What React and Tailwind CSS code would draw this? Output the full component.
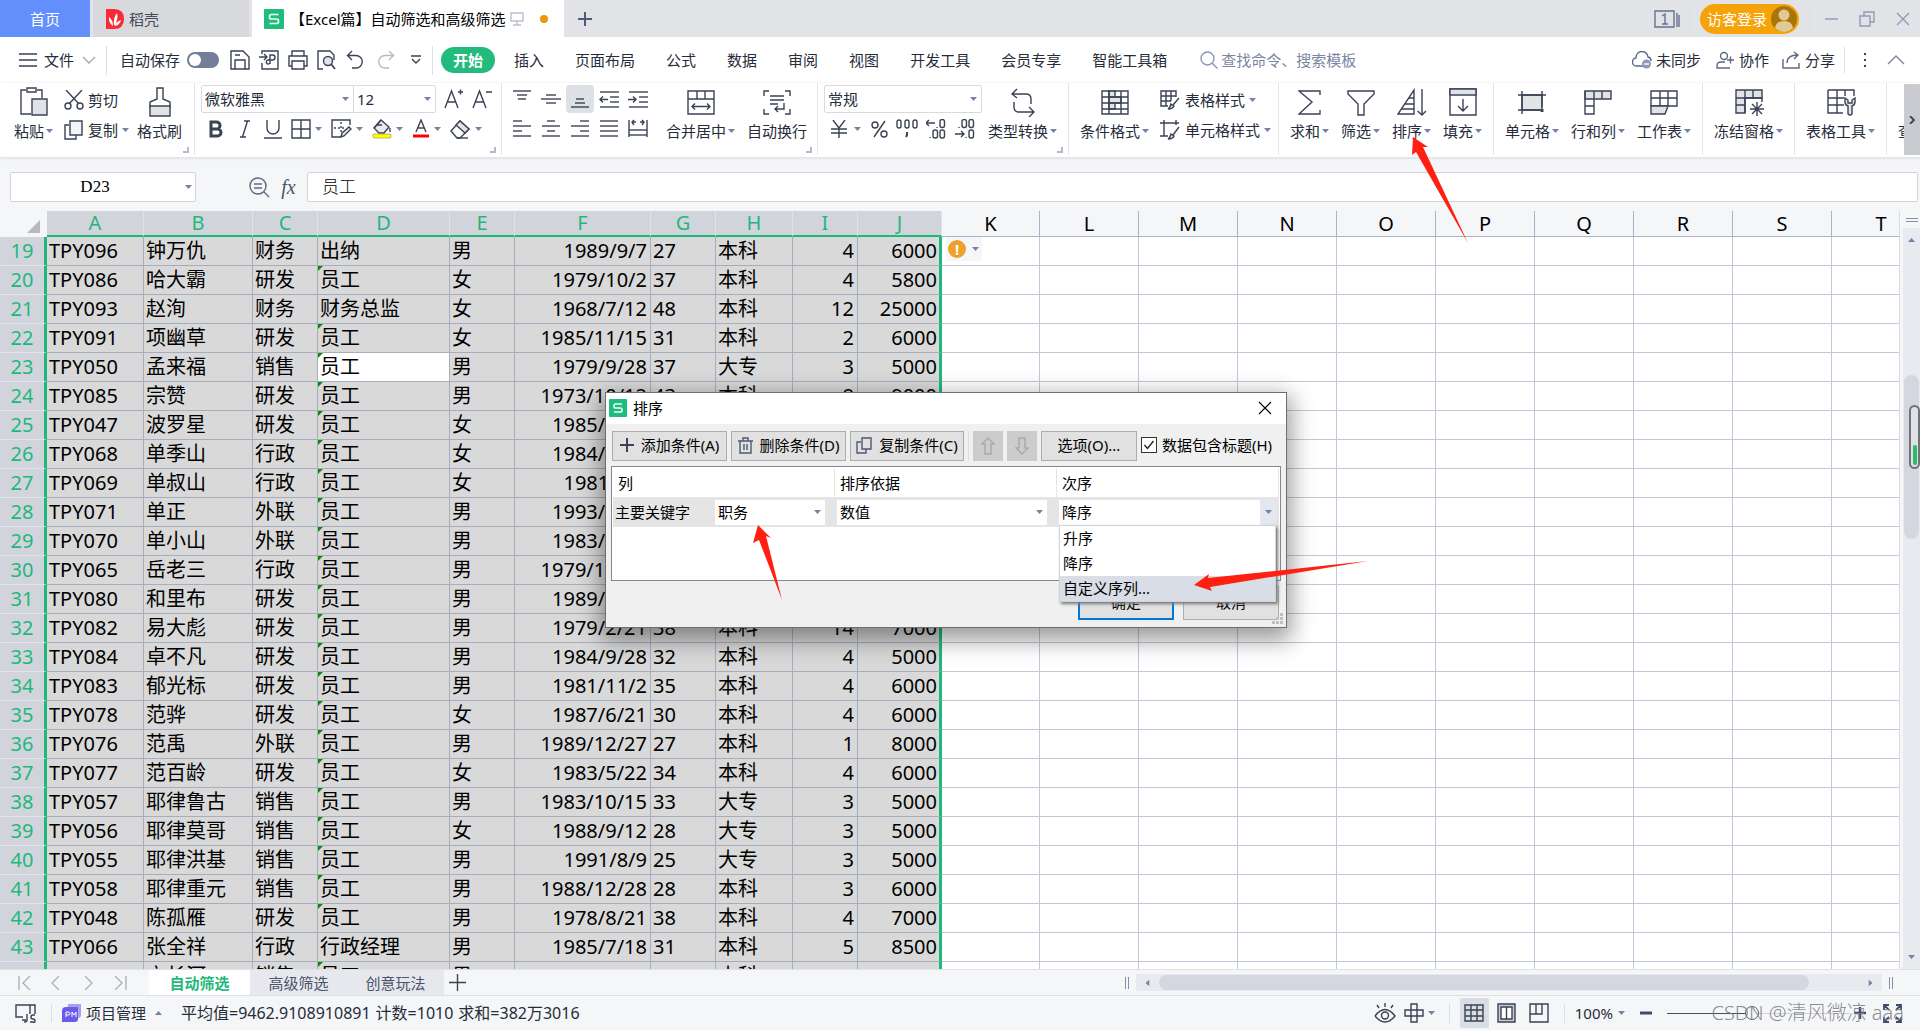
import { useState } from 'react';
import clsx from 'clsx';

const columns = [
  { name: 'A', width: 97 },
  { name: 'B', width: 109 },
  { name: 'C', width: 65 },
  { name: 'D', width: 132 },
  { name: 'E', width: 65 },
  { name: 'F', width: 136, right: true },
  { name: 'G', width: 65 },
  { name: 'H', width: 77 },
  { name: 'I', width: 65, right: true },
  { name: 'J', width: 84, right: true },
  { name: 'K', width: 98 },
  ...'LMNOPQRST'.split('').map((name) => ({ name, width: 99 })),
];
const SELECTED = 10;
const tableWidth = 47 + columns.reduce((sum, c) => sum + c.width, 0);

const rows = [
  ['TPY096', '钟万仇', '财务', '出纳', '男', '1989/9/7', '27', '本科', '4', '6000'],
  ['TPY086', '哈大霸', '研发', '员工', '女', '1979/10/2', '37', '本科', '4', '5800'],
  ['TPY093', '赵洵', '财务', '财务总监', '女', '1968/7/12', '48', '本科', '12', '25000'],
  ['TPY091', '项幽草', '研发', '员工', '女', '1985/11/15', '31', '本科', '2', '6000'],
  ['TPY050', '孟来福', '销售', '员工', '男', '1979/9/28', '37', '大专', '3', '5000'],
  ['TPY085', '宗赞', '研发', '员工', '男', '1973/10/12', '43', '本科', '8', '9000'],
  ['TPY047', '波罗星', '研发', '员工', '女', '1985/4/12', '31', '本科', '4', '6000'],
  ['TPY068', '单季山', '行政', '员工', '女', '1984/7/12', '32', '本科', '4', '5000'],
  ['TPY069', '单叔山', '行政', '员工', '女', '1981/3/5', '35', '本科', '4', '5000'],
  ['TPY071', '单正', '外联', '员工', '男', '1993/9/14', '23', '本科', '1', '5000'],
  ['TPY070', '单小山', '外联', '员工', '男', '1983/7/16', '33', '本科', '3', '6000'],
  ['TPY065', '岳老三', '行政', '员工', '男', '1979/10/12', '37', '大专', '3', '5000'],
  ['TPY080', '和里布', '研发', '员工', '男', '1989/8/16', '27', '本科', '4', '6000'],
  ['TPY082', '易大彪', '研发', '员工', '男', '1979/2/21', '38', '本科', '14', '7000'],
  ['TPY084', '卓不凡', '研发', '员工', '男', '1984/9/28', '32', '本科', '4', '5000'],
  ['TPY083', '郁光标', '研发', '员工', '男', '1981/11/2', '35', '本科', '4', '6000'],
  ['TPY078', '范骅', '研发', '员工', '女', '1987/6/21', '30', '本科', '4', '6000'],
  ['TPY076', '范禹', '外联', '员工', '男', '1989/12/27', '27', '本科', '1', '8000'],
  ['TPY077', '范百龄', '研发', '员工', '女', '1983/5/22', '34', '本科', '4', '6000'],
  ['TPY057', '耶律鲁古', '销售', '员工', '男', '1983/10/15', '33', '大专', '3', '5000'],
  ['TPY056', '耶律莫哥', '销售', '员工', '女', '1988/9/12', '28', '大专', '3', '5000'],
  ['TPY055', '耶律洪基', '销售', '员工', '男', '1991/8/9', '25', '大专', '3', '5000'],
  ['TPY058', '耶律重元', '销售', '员工', '男', '1988/12/28', '28', '本科', '3', '6000'],
  ['TPY048', '陈孤雁', '研发', '员工', '男', '1978/8/21', '38', '本科', '4', '7000'],
  ['TPY066', '张全祥', '行政', '行政经理', '男', '1985/7/18', '31', '本科', '5', '8500'],
  ['TPY051', '方长河', '销售', '员工', '男', '1982/11/13', '34', '本科', '2', '4500'],
];

const menus = ['插入', '页面布局', '公式', '数据', '审阅', '视图', '开发工具', '会员专享', '智能工具箱'];

const Icon = ({ w, h, children, color = '#3a4254', className }) => (
  <svg
    width={w}
    height={h}
    viewBox={`0 0 ${w} ${h}`}
    fill="none"
    stroke={color}
    strokeWidth="1.4"
    className={clsx('shrink-0', className)}
  >
    {children}
  </svg>
);

const Caret = ({ up, className }) => (
  <svg width="7" height="4" viewBox="0 0 7 4" fill="#7483a3" className={clsx('shrink-0', className)}>
    <path d={up ? 'M0 4h7L3.5 0z' : 'M0 0h7L3.5 4z'} />
  </svg>
);

const Logo = ({ size }) => (
  <svg width={size} height={size} viewBox="0 0 20 20" className="shrink-0">
    <rect width="20" height="20" rx="1" fill="#1fbd7d" />
    <path d="M14.5 5.5H7.5a2 2 0 0 0-2 2v.5a2 2 0 0 0 2 2h5a2 2 0 0 1 2 2v.5a2 2 0 0 1-2 2h-7" fill="none" stroke="#e9fff5" strokeWidth="1.7" />
  </svg>
);

const icons = {
  save: (
    <Icon w={20} h={20}>
      <path d="M1 1h12l6 6v12H1zM5 19v-9h10v9M5 5h5" />
    </Icon>
  ),
  exportPdf: (
    <Icon w={20} h={20}>
      <path d="M3 4V1h16v18H3v-6M0 7h8M5 4l3 3-3 3M11 14V5h2.500a2.500 2.500 0 0 1 0 5H9a2 2 0 1 0 2 3" />
    </Icon>
  ),
  print: (
    <Icon w={20} h={20}>
      <path d="M4 6V1h12v5M4 16H1V6h18v10h-3M4 11h12v8H4z" />
    </Icon>
  ),
  preview: (
    <Icon w={20} h={20}>
      <path d="M6 19H1V1h12l4 4v5" />
      <circle cx="11" cy="11" r="4.500" fill="#dfe3ec" />
      <path d="m14 14 4 5" strokeWidth="1.800" />
    </Icon>
  ),
  undo: (
    <Icon w={19} h={20}>
      <path d="M6 1 1.500 5.500 6 10M2 5.500h8a6 6 0 0 1 0 12.500H6" />
    </Icon>
  ),
  redo: (
    <Icon w={19} h={20} color="#b5bac4">
      <path d="M13 1l4.500 4.500L13 10M17 5.500H9A6 6 0 0 0 9 18h4" />
    </Icon>
  ),
  paste: (
    <Icon w={28} h={30}>
      <path d="M6 3H1v24h10M17 3h5v8M7 1h9v4H7z" />
      <path d="M12 12h15v16H12z" fill="#e1e3e6" />
    </Icon>
  ),
  cut: (
    <Icon w={20} h={20}>
      <path d="M2 0l13 14M18 0L5 14" />
      <circle cx="4" cy="16" r="3" />
      <circle cx="16" cy="16" r="3" />
    </Icon>
  ),
  copy: (
    <Icon w={20} h={20}>
      <path d="M5 5H1v14h11v-4" />
      <path d="M6 1h12v14H6z" fill="#f4f5f7" />
    </Icon>
  ),
  brush: (
    <Icon w={24} h={30}>
      <path d="M9 12V1h6v11l7 3v5H2v-5z" />
      <path d="M2 19h20v10H2z" fill="#e1e3e6" />
    </Icon>
  ),
  biggerFont: (
    <Icon w={20} h={20}>
      <path d="M1 19 7.500 2 14 19M3.500 13h8M14 3h5M16.500.5v5" />
    </Icon>
  ),
  smallerFont: (
    <Icon w={20} h={20}>
      <path d="M1 19 7.500 2 14 19M3.500 13h8M14 3h6" />
    </Icon>
  ),
  bold: (
    <Icon w={15} h={18}>
      <path d="M3 2h5.500a3.500 3.500 0 0 1 0 7H3zM3 9h6.500a3.500 3.500 0 0 1 0 7H3z" strokeWidth="3" />
    </Icon>
  ),
  italic: (
    <Icon w={12} h={18}>
      <path d="M5 1h6M1 17h6M8.500 1l-5 16" />
    </Icon>
  ),
  underline: (
    <Icon w={20} h={19}>
      <path d="M4 0v8a6 6 0 0 0 12 0V0M1 18h18" />
    </Icon>
  ),
  borders: (
    <Icon w={20} h={20}>
      <path d="M1 1h18v18H1zM10 1v18M1 10h18" />
    </Icon>
  ),
  drawBorder: (
    <Icon w={21} h={20}>
      <path d="M10 18H1V1h18v5" />
      <path d="M10 3v12M3 9h11" strokeDasharray="2 2" />
      <path d="m10 18 1-4 7-6 2 2-7 7z" fill="#e1e3e6" />
    </Icon>
  ),
  fill: (
    <Icon w={20} h={20}>
      <path d="m9 1 8 7-5 6H7L2 9z" fill="#e9eaed" />
      <path d="M2 9 9 1M4 6h6M18 9v4" />
      <rect x="1" y="15" width="18" height="4" rx="1" fill="#ffff00" stroke="#8f8f5a" strokeWidth="0.600" />
    </Icon>
  ),
  fontColor: (
    <Icon w={18} h={20}>
      <path d="M4 13 9 1l5 12M5.500 9h7" />
      <path d="M1 17h16" stroke="#ff0000" strokeWidth="3" />
    </Icon>
  ),
  eraser: (
    <Icon w={21} h={20}>
      <path d="m1 12 9-10 9 8-9 9H7z" />
      <path d="m6 6 4-4 9 8-4 4z" fill="#e1e3e6" />
      <path d="M7 19h11" />
    </Icon>
  ),
  merge: (
    <Icon w={28} h={30}>
      <path d="M1 4h26v23H1zM1 12h26M10 4v8M18 4v8M5 19.500h18M8 16.500l-3 3 3 3M20 16.500l3 3-3 3" />
    </Icon>
  ),
  wrap: (
    <Icon w={28} h={30}>
      <path d="M6 4H1v5M22 4h5v5M6 27H1v-5M22 27h5v-5M7 9h14M7 13h14M7 17h8M21 16v6h-9M15 19l-3 3 3 3" />
    </Icon>
  ),
  convert: (
    <Icon w={26} h={30}>
      <path d="M7 2 2 7l5 4M2 7h14q5 0 5 5v5M19 20l5 5-5 5M24 25H9q-5 0-5-5v-5" />
    </Icon>
  ),
  conditional: (
    <Icon w={28} h={30}>
      <path d="M1 4h26v23H1z" />
      <path d="M8 4h6v6H8zM8 10h12v6H8zM8 16h6v6H8z" fill="#e1e3e6" />
      <path d="M1 10h26M1 16h26M1 22h26M8 4v23M20 4v23" />
    </Icon>
  ),
  tableStyle: (
    <Icon w={21} h={20}>
      <path d="M8 16H1V1h15v6M1 6h15M1 11h10M6 1v15M11 1v10" />
      <path d="m19 8-6 7M11 14l3 2q-1 3-6 3 2-1 3-5z" fill="#e1e3e6" />
    </Icon>
  ),
  cellStyle: (
    <Icon w={21} h={20}>
      <path d="M4 0v16M0 3h19M16 0v5M0 16h8" />
      <path d="m19 7-6 8M11 14l3 2q-1 3-6 3 2-1 3-5z" fill="#e1e3e6" />
    </Icon>
  ),
  sum: (
    <Icon w={24} h={30}>
      <path d="M22 8V4H1l13 11L1 27h21v-4" />
    </Icon>
  ),
  filter: (
    <Icon w={28} h={30}>
      <path d="M1 4h26v3L17 17v11h-6V17L1 7z" />
    </Icon>
  ),
  sort: (
    <Icon w={30} h={30}>
      <path d="M17 3v24H1zM17 11h-5M17 17H8M17 22H4M25 2v26M20.500 24l4.500 4 4-4" />
    </Icon>
  ),
  fillDown: (
    <Icon w={28} h={30}>
      <path d="M1 2h26v26H1z" />
      <path d="M1 2h26v6H1z" fill="#e1e3e6" />
      <path d="M14 12v12M9 19l5 5 5-5" />
    </Icon>
  ),
  cells: (
    <Icon w={30} h={30}>
      <path d="M5 8h20v15H5z" fill="#e1e3e6" />
      <path d="M5 4v23M1 8h28M25 4v16M1 23h22" />
      <path d="M25 22v3" strokeWidth="3" />
    </Icon>
  ),
  rowsCols: (
    <Icon w={28} h={30}>
      <path d="M1 4h26v8H1z" fill="#e1e3e6" />
      <path d="M1 4v23h9V4M18 4v8M1 19h9" />
    </Icon>
  ),
  worksheet: (
    <Icon w={28} h={30}>
      <path d="M1 4h26v15H1zM1 11h26M10 4v15M18 4v15" />
      <path d="M1 19h17l-3 8H1z" fill="#e1e3e6" />
    </Icon>
  ),
  freeze: (
    <Icon w={30} h={30}>
      <path d="M2 3h26v8H11v15H2z" fill="#e1e3e6" />
      <path d="M11 3v23M19 3v8M2 11h26v4M2 18h9" />
      <path d="M23 15v14M16 22h14M18 17l10 10M28 17 18 27" />
    </Icon>
  ),
  tableTool: (
    <Icon w={30} h={30}>
      <path d="M2 3h26v6M2 3v23h15M2 11h16M2 18h16M11 3v23M19 3v6" />
      <path d="M19 11v4q0 3 3 4v8q2 2 4 0v-8q3-1 3-4v-4l-3 2v3h-4v-3z" fill="#e1e3e6" />
    </Icon>
  ),
};

const LineIcon = ({ lines, children }) => (
  <Icon w={20} h={20}>
    {lines.map(([x1, x2, y]) => (
      <path key={y} d={`M${x1} ${y}H${x2}`} />
    ))}
    {children}
  </Icon>
);

const alignTop = [
  { id: '顶端对齐', lines: [[1, 19, 2], [5, 15, 6], [6, 14, 10]] },
  { id: '垂直居中', lines: [[5, 15, 6], [0, 20, 10], [5, 15, 14]] },
  { id: '底端对齐', lines: [[6, 14, 10], [5, 15, 14], [1, 19, 18]], active: true },
  { id: '减少缩进', lines: [[1, 20, 3], [11, 20, 8], [11, 20, 13], [1, 20, 18]], extra: 'M9 10.500H1M4 7.500l-3 3 3 3' },
  { id: '增加缩进', lines: [[1, 20, 3], [11, 20, 8], [11, 20, 13], [1, 20, 18]], extra: 'M0 10.500h8M5 7.500l3 3-3 3' },
];
const alignBottom = [
  { id: '左对齐', lines: [[1, 10, 2], [1, 19, 7], [1, 10, 12], [1, 19, 17]] },
  { id: '水平居中', lines: [[6, 14, 2], [1, 19, 7], [6, 14, 12], [1, 19, 17]] },
  { id: '右对齐', lines: [[10, 19, 2], [1, 19, 7], [10, 19, 12], [1, 19, 17]] },
  { id: '两端对齐', lines: [[1, 19, 2], [1, 19, 7], [1, 19, 12], [1, 19, 17]] },
  { id: '分散对齐', lines: [[1, 19, 11], [1, 19, 16]], extra: 'M1 1v17M19 1v17M4 3h4M12 3h4M6 1 4 3l2 3M14 1l2 2-2 3' },
];

const Group = ({ width, corner, children }) => (
  <div className={clsx('relative flex h-[72px] shrink-0 border-r border-[#e4e6ea]', width)}>
    {children}
    {corner && (
      <span className="absolute right-[5px] bottom-0.5 h-1.5 w-1.5 border-r-2 border-b-2 border-[#b4bac8]" />
    )}
  </div>
);

const BigButton = ({ icon, label, caret = true }) => (
  <button type="button" className="flex shrink-0 flex-col items-center pt-1">
    <span className="flex h-[30px] items-center">{icons[icon]}</span>
    <span className="mt-1 flex items-center leading-5 whitespace-nowrap">
      {label}
      {caret && <Caret className="ml-0.5" />}
    </span>
  </button>
);

const SmallButton = ({ icon, label, caret = true }) => (
  <button type="button" className="flex h-[30px] shrink-0 items-center gap-1 leading-5 whitespace-nowrap">
    {icons[icon]}
    {label}
    {caret && <Caret />}
  </button>
);

const IconButton = ({ icon, caret, label }) => (
  <button type="button" aria-label={label} className="flex shrink-0 items-center gap-1">
    {icons[icon]}
    {caret && <Caret />}
  </button>
);

const Combo = ({ label, value, options = [], className }) => (
  <div className={clsx('relative bg-white', className)}>
    <select
      aria-label={label}
      defaultValue={value}
      className="h-full w-full appearance-none bg-transparent pr-4 pl-[3px] leading-5 outline-none"
    >
      {[value, ...options].map((o) => (
        <option key={o}>{o}</option>
      ))}
    </select>
    <Caret className="pointer-events-none absolute top-1/2 right-1 -mt-0.5" />
  </div>
);

const Sep = ({ className }) => <span className={clsx('w-px shrink-0 bg-[#dcdee3]', className)} />;

const TitleBar = () => (
  <header className="flex h-[37px] shrink-0 items-center bg-[#e2e3e7]">
    <button type="button" className="mr-[3px] h-full w-[90px] bg-[#628ffb] text-white">
      首页
    </button>
    <button type="button" className="mr-[3px] flex h-full w-[156px] items-center gap-[5px] bg-[#d8d9dc] pl-[13px] text-[#444b5c]">
      <svg width="18" height="20" viewBox="0 0 18 20">
        <path d="M0 0h8q10 0 10 10T8 20H0z" fill="#fb2a38" />
        <path d="M8 17Q7 8 11 4q2 6-3 13M7 17Q2 13 3 8q4 3 4 9M9 17q0-4 6-6-1 5-6 6" fill="#fff" />
      </svg>
      稻壳
    </button>
    <button type="button" className="flex h-full w-[312px] items-center bg-white pl-3 text-black">
      <Logo size={20} />
      <span className="ml-1.5 whitespace-nowrap">【Excel篇】自动筛选和高级筛选</span>
      <Icon w={14} h={14} color="#b8c0d2" className="ml-1">
        <path d="M1 1h12v8H1zM7 9v4M3 13h8" />
      </Icon>
      <span className="ml-4 h-2 w-2 rounded-full bg-[#e89b00]" />
    </button>
    <button type="button" aria-label="新建标签" className="ml-[13px]">
      <Icon w={16} h={16} color="#4e5b7a">
        <path d="M8 1v14M1 8h14" strokeWidth="2" />
      </Icon>
    </button>
    <div className="ml-auto flex h-full items-center pr-2.5">
      <Icon w={26} h={18} color="#66728e" className="mr-[9px]">
        <path d="M1 1h19v16H1zM23 3v14M25 5v12" />
        <path d="M8 6l3-2v10M8 14h6" />
      </Icon>
      <Sep className="mr-[10px] h-[25px] bg-[#c6c9d0]" />
      <button type="button" className="mr-[10px] flex h-[30px] w-[99px] items-center justify-between rounded-full bg-[#f6a30a] pr-0.5 pl-[7px] text-white">
        访客登录
        <svg width="26" height="26" viewBox="0 0 26 26">
          <circle cx="13" cy="13" r="13" fill="#a87608" />
          <circle cx="13" cy="9" r="5.500" fill="#e2c893" />
          <path d="M4 22q1-7 9-7t9 7q-4 4-9 4t-9-4" fill="#e2c893" />
        </svg>
      </button>
      <Sep className="mr-[15px] h-[25px] bg-[#c6c9d0]" />
      <div className="flex items-center gap-[21px]">
        <button type="button" aria-label="最小化">
          <Icon w={13} h={16} color="#8f9bb5"><path d="M0 8h13" /></Icon>
        </button>
        <button type="button" aria-label="还原">
          <Icon w={16} h={16} color="#8f9bb5"><path d="M1 5h10v10H1zM5 5V1h10v10h-4" /></Icon>
        </button>
        <button type="button" aria-label="关闭">
          <Icon w={14} h={14} color="#8f9bb5"><path d="m1 1 12 12M13 1 1 13" /></Icon>
        </button>
      </div>
    </div>
  </header>
);

const MenuBar = () => (
  <nav className="flex h-[46px] shrink-0 items-center bg-white pl-[19px] whitespace-nowrap">
    <button type="button" className="flex items-center gap-[7px]">
      <Icon w={18} h={14}><path d="M0 1h18M0 7h18M0 13h18" /></Icon>
      文件
      <Icon w={14} h={8} color="#a3a8b3" className="ml-px"><path d="m1 1 6 6 6-6" /></Icon>
    </button>
    <Sep className="mx-2.5 h-[29px]" />
    <label className="ml-[3px] flex items-center gap-[7px]">
      自动保存
      <input
        type="checkbox"
        className="h-4 w-8 appearance-none rounded-full bg-[#737f99] before:mt-0.5 before:ml-0.5 before:block before:h-3 before:w-3 before:rounded-full before:bg-white"
      />
    </label>
    <div className="ml-[11px] flex items-center gap-[9px]">
      <IconButton icon="save" label="保存" />
      <IconButton icon="exportPdf" label="输出为PDF" />
      <IconButton icon="print" label="打印" />
      <IconButton icon="preview" label="打印预览" />
      <IconButton icon="undo" label="撤销" />
      <span className="ml-0.5 flex"><IconButton icon="redo" label="恢复" /></span>
    </div>
    <button type="button" aria-label="自定义" className="ml-4">
      <Icon w={10} h={10}><path d="M0 1h10M1 4l4 4 4-4" /></Icon>
    </button>
    <Sep className="mr-[10px] ml-[11px] h-[29px]" />
    <button type="button" className="-ml-0.5 h-[26px] w-[54px] rounded-full bg-[#22bb7d] font-bold text-white">
      开始
    </button>
    <div className="ml-[19px] flex gap-[31px]">
      {menus.map((m) => (
        <button type="button" key={m}>
          {m}
        </button>
      ))}
    </div>
    <label className="ml-[33px] flex items-center gap-[3px]">
      <Icon w={18} h={18} color="#8a96b4">
        <circle cx="7.500" cy="7.500" r="6.500" />
        <path d="m12 12 5.500 5.500" />
      </Icon>
      <input
        aria-label="搜索"
        placeholder="查找命令、搜索模板"
        className="w-[150px] outline-none placeholder:text-[#7a86a3]"
      />
    </label>
    <div className="ml-auto flex items-center pr-[15px]">
      <button type="button" className="flex items-center gap-1">
        <Icon w={20} h={18} color="#5d6880">
          <path d="M11 15H5a4 4 0 0 1-1-8 6 6 0 0 1 12-1 4 4 0 0 1 3 4" />
          <circle cx="14.500" cy="13" r="4.500" fill="#8c99b9" stroke="none" />
          <path d="M12 13h5" stroke="#fff" />
        </Icon>
        未同步
      </button>
      <button type="button" className="ml-[15px] flex items-center gap-[5px]">
        <Icon w={18} h={18} color="#5d6880">
          <circle cx="8" cy="5" r="3.500" />
          <path d="M14 17H1v-2q0-4 4-4h4M11 9h7M14.500 5.500v7" />
        </Icon>
        协作
      </button>
      <button type="button" className="ml-[13px] flex items-center gap-[5px]">
        <Icon w={18} h={18} color="#5d6880">
          <path d="M1 8v9h16v-5M5 12q0-8 11-8M12 1l4 3-4 4" />
        </Icon>
        分享
      </button>
      <Sep className="ml-[9px] h-[26px]" />
      <button type="button" aria-label="更多" className="ml-[18px]">
        <Icon w={4} h={16}><path d="M2 1v2M2 7v2M2 13v2" strokeWidth="2" /></Icon>
      </button>
      <button type="button" aria-label="收起功能区" className="ml-5">
        <Icon w={18} h={10} color="#7c8494"><path d="m1 9 8-8 8 8" /></Icon>
      </button>
    </div>
  </nav>
);

const AlignButton = ({ item }) => (
  <button
    type="button"
    aria-label={item.id}
    className={clsx('flex h-7 w-7 items-center justify-center rounded-sm', item.active && 'bg-[#dde0e4]')}
  >
    <LineIcon lines={item.lines}>{item.extra && <path d={item.extra} />}</LineIcon>
  </button>
);

const Ribbon = () => (
  <section className="z-10 flex h-[74px] shrink-0 bg-white shadow-[0_1px_3px_#d5d7dc]">
    <div className="flex min-w-0 flex-1 overflow-hidden">
      <Group width="w-[195px] pl-[14px]" corner>
        <BigButton icon="paste" label="粘贴" />
        <div className="ml-[11px] flex flex-col pt-0.5">
          <SmallButton icon="cut" label="剪切" caret={false} />
          <SmallButton icon="copy" label="复制" />
        </div>
        <div className="ml-2 flex">
          <BigButton icon="brush" label="格式刷" caret={false} />
        </div>
      </Group>
      <Group width="w-[307px] pl-1.5" corner>
        <div className="flex flex-col pt-0.5">
          <div className="flex items-center gap-2">
            <div className="flex h-7 rounded-xs border border-[#d8dade]">
              <Combo label="字体" value="微软雅黑" className="w-[151px]" />
              <Combo label="字号" value="12" className="w-[82px] border-l border-[#d8dade]" />
            </div>
            <IconButton icon="biggerFont" label="增大字号" />
            <IconButton icon="smallerFont" label="减小字号" />
          </div>
          <div className="mt-1.5 flex items-center pl-[7px]">
            <IconButton icon="bold" label="加粗" />
            <div className="ml-4 flex"><IconButton icon="italic" label="倾斜" /></div>
            <div className="ml-3 flex"><IconButton icon="underline" label="下划线" /></div>
            <div className="ml-2 flex gap-[9px]">
              <IconButton icon="borders" label="边框" caret />
              <IconButton icon="drawBorder" label="绘图边框" caret />
              <IconButton icon="fill" label="填充颜色" caret />
              <IconButton icon="fontColor" label="字体颜色" caret />
              <IconButton icon="eraser" label="清除" caret />
            </div>
          </div>
        </div>
      </Group>
      <Group width="w-[316px] pl-1.5" corner>
        <div className="flex w-[147px] shrink-0 flex-col gap-0.5 pt-0.5">
          <div className="flex gap-px">{alignTop.map((a) => <AlignButton key={a.id} item={a} />)}</div>
          <div className="flex gap-px">{alignBottom.map((a) => <AlignButton key={a.id} item={a} />)}</div>
        </div>
        <div className="ml-[11px] flex gap-3">
          <BigButton icon="merge" label="合并居中" />
          <BigButton icon="wrap" label="自动换行" caret={false} />
        </div>
      </Group>
      <Group width="w-[251px] pl-1.5" corner>
        <div className="flex flex-col pt-0.5">
          <Combo label="数字格式" value="常规" className="h-7 w-[158px] rounded-xs border border-[#d8dade]" />
          <div className="mt-1.5 flex items-center pl-1.5">
            <button type="button" aria-label="货币" className="flex items-center gap-1.5">
              <Icon w={18} h={18}><path d="m3 0 6 8 6-8M9 8v10M1 9h16M1 13h16" /></Icon>
              <Caret />
            </button>
            <button type="button" aria-label="百分比" className="ml-[10px]">
              <Icon w={17} h={18}>
                <circle cx="4" cy="5" r="3" />
                <circle cx="13" cy="14" r="3" />
                <path d="M14 1 3 17" />
              </Icon>
            </button>
            <button type="button" aria-label="千位分隔" className="ml-2">
              <Icon w={22} h={20}>
                <rect x="1" y="1" width="4" height="8" rx="2" />
                <rect x="9" y="1" width="4" height="8" rx="2" />
                <rect x="17" y="1" width="4" height="8" rx="2" />
                <path d="M11 13v3l-1 2" strokeWidth="2" />
              </Icon>
            </button>
            <button type="button" aria-label="增加小数位" className="ml-2">
              <Icon w={20} h={20}>
                <path d="M0 4h9M3 1 0 4l3 3M11 8v1M4 18v1" />
                <rect x="14" y="0.500" width="4.500" height="8" rx="2" />
                <rect x="7" y="11" width="4.500" height="8" rx="2" />
                <rect x="14" y="11" width="4.500" height="8" rx="2" />
              </Icon>
            </button>
            <button type="button" aria-label="减少小数位" className="ml-[9px]">
              <Icon w={20} h={20}>
                <path d="M0 15h9M6 12l3 3-3 3M11 18v1M4 8v1" />
                <rect x="14" y="0.500" width="4.500" height="8" rx="2" />
                <rect x="7" y="0.500" width="4.500" height="8" rx="2" />
                <rect x="14" y="11" width="4.500" height="8" rx="2" />
              </Icon>
            </button>
          </div>
        </div>
        <div className="ml-1.5 flex">
          <BigButton icon="convert" label="类型转换" />
        </div>
      </Group>
      <Group width="w-[210px] pl-[11px]">
        <BigButton icon="conditional" label="条件格式" />
        <div className="ml-[11px] flex flex-col pt-0.5">
          <SmallButton icon="tableStyle" label="表格样式" />
          <SmallButton icon="cellStyle" label="单元格样式" />
        </div>
      </Group>
      <Group width="w-[215px] gap-3 pl-[11px]">
        <BigButton icon="sum" label="求和" />
        <BigButton icon="filter" label="筛选" />
        <BigButton icon="sort" label="排序" />
        <BigButton icon="fillDown" label="填充" />
      </Group>
      <Group width="w-[209px] gap-3 pl-[11px]">
        <BigButton icon="cells" label="单元格" />
        <BigButton icon="rowsCols" label="行和列" />
        <BigButton icon="worksheet" label="工作表" />
      </Group>
      <Group width="w-[92px] pl-[11px]">
        <BigButton icon="freeze" label="冻结窗格" />
      </Group>
      <Group width="w-[92px] pl-[11px]">
        <BigButton icon="tableTool" label="表格工具" />
      </Group>
      <div className="flex w-[17px] overflow-hidden pt-[38px] pl-[11px] leading-5">查</div>
    </div>
    <button type="button" aria-label="向右滚动" className="mt-px flex h-[71px] w-4 shrink-0 items-center justify-center bg-[#c9cbd1]">
      <Icon w={6} h={8}><path d="m1 0 4 4-4 4" strokeWidth="1.800" /></Icon>
    </button>
  </section>
);

const FormulaBar = () => (
  <div className="flex h-[54px] shrink-0 items-center bg-[#f5f6f8] pt-1.5">
    <div className="relative ml-2.5 h-[30px] w-[186px] rounded-xs border border-[#d2d4da] bg-white">
      <input
        aria-label="名称框"
        defaultValue="D23"
        className="h-full w-full bg-transparent pr-4 text-center font-['Liberation_Serif',serif] text-[17px] text-black outline-none"
      />
      <Caret className="absolute top-3 right-[3px]" />
    </div>
    <button type="button" aria-label="查找" className="ml-[53px]">
      <Icon w={21} h={21} color="#5d6880">
        <circle cx="9" cy="9" r="8" />
        <path d="m15 15 5 5M5 7h8M5 11h8" />
      </Icon>
    </button>
    <button type="button" className="ml-[9px] w-[19px] font-['Liberation_Serif',serif] text-xl leading-6 text-[#4a556e] italic">
      fx
    </button>
    <input
      aria-label="编辑栏"
      defaultValue="员工"
      className="mr-0.5 ml-[9px] h-[30px] min-w-0 flex-1 rounded-xs border border-[#d2d4da] bg-white pb-1 pl-3.5 text-[17px] font-light text-black outline-none"
    />
  </div>
);

const Grid = () => (
  <div className="relative min-w-0 flex-1 overflow-hidden border-r border-[#d8dbe3] bg-white">
    <table
      className="table-fixed border-separate border-spacing-0 text-xl leading-7 text-black"
      style={{ width: tableWidth }}
    >
      <colgroup>
        <col className="w-[47px]" />
        {columns.map((c) => (
          <col key={c.name} style={{ width: c.width }} />
        ))}
      </colgroup>
      <thead>
        <tr className="h-[26px] leading-6">
          <th className="bg-[#f5f6f8] p-0">
            <svg width="13" height="13" viewBox="0 0 13 13" className="mt-1 ml-[27px]">
              <path d="M13 0v13H0z" fill="#b9babd" />
            </svg>
          </th>
          {columns.map((c, i) => (
            <th
              key={c.name}
              className={clsx(
                'h-[26px] border-r p-0 font-normal',
                i < SELECTED
                  ? 'border-b-2 border-r-[#dfe3ee] border-b-[#1fb87c] bg-[#d2d4dc] text-[#1fb87c]'
                  : 'border-b border-[#aab3c9] bg-[#f5f6f8]'
              )}
            >
              {c.name}
            </th>
          ))}
        </tr>
      </thead>
      <tbody>
        {rows.map((row, r) => (
          <tr key={row[0]} className="h-[29px]">
            <th className="border-r-3 border-b border-r-[#1fb87c] border-b-[#dfe3ee] bg-[#d2d4dc] p-0 font-normal text-[#1fb87c]">
              {r + 19}
            </th>
            {columns.map((c, i) => (
              <td
                key={c.name}
                className={clsx(
                  'relative h-[29px] overflow-hidden border-b py-0 pl-0.5 whitespace-nowrap',
                  i < SELECTED ? 'border-[#a5adbf]' : 'border-r border-[#c2c8da]',
                  i < SELECTED && (r === 4 && i === 3 ? 'bg-white' : 'bg-[#d9d9d9]'),
                  i < SELECTED - 1 && 'border-r pr-[3px]',
                  i === SELECTED - 1 && 'border-r-3 border-r-[#1fb87c] pr-0.5',
                  c.right && 'text-right'
                )}
              >
                {row[i]}
                {i === 3 && row[3] === '员工' && (
                  <span className="absolute top-0 left-0 border-t-5 border-r-5 border-t-[#0b8a0b] border-r-transparent" />
                )}
              </td>
            ))}
          </tr>
        ))}
      </tbody>
    </table>
    <button
      type="button"
      aria-label="错误提示"
      className="absolute top-[26px] left-[946px] flex h-6 w-9 items-center gap-1.5 bg-[#f5f6f8] pl-0.5"
    >
      <span className="flex h-[18px] w-[18px] items-center justify-center rounded-full bg-[#efa02a] text-[15px] leading-4 font-bold text-white">
        !
      </span>
      <Caret />
    </button>
  </div>
);

const VScroll = () => (
  <div className="flex w-5 shrink-0 flex-col bg-[#f5f6f8] pl-[3px]">
    <div className="flex h-[17px] shrink-0 items-center justify-center">
      <span className="h-1 w-3 border-y border-[#8390ab]" />
    </div>
    <div className="relative flex flex-1 flex-col items-center justify-between bg-[#e9eaef] py-2.5">
      <Caret up />
      <span className="absolute top-[147px] h-[164px] w-[15px] rounded-full bg-[#d4d7df]" />
      <span className="absolute top-[177px] right-0 flex h-[64px] w-[11px] items-end justify-center rounded-full border-2 border-[#707276] bg-[#dfe1e6] pb-0.5">
        <span className="h-5 w-1 rounded-xs bg-[#27bd68]" />
      </span>
      <Caret />
    </div>
  </div>
);

const SheetTabs = () => (
  <div className="flex h-[27px] shrink-0 items-center border-y border-[#dfe1e7] bg-[#f5f6f8]">
    <div className="flex w-[149px] shrink-0 items-center gap-[19px] pl-[18px]">
      {['M1 0v14M12 0 5 7l7 7', 'M9 0 2 7l7 7', 'M3 0l7 7-7 7', 'M1 0l7 7-7 7M12 0v14'].map((d) => (
        <button type="button" key={d} aria-label="切换工作表">
          <Icon w={13} h={14} color="#aeb1b8"><path d={d} /></Icon>
        </button>
      ))}
    </div>
    <button type="button" className="h-full w-[101px] bg-white font-bold text-[#1fb87c]">自动筛选</button>
    <button type="button" className="h-full w-[97px] bg-[#e7e8ee] text-[#49536b]">高级筛选</button>
    <button type="button" className="h-full w-[97px] bg-[#e7e8ee] text-[#49536b]">创意玩法</button>
    <button type="button" aria-label="新建工作表" className="ml-[5px]">
      <Icon w={17} h={17}><path d="M8.500 0v17M0 8.500h17" /></Icon>
    </button>
    <div className="ml-auto flex w-[795px] items-center gap-[7px]">
      <span className="h-3 w-1 border-x border-[#8390ab]" />
      <div className="flex h-[17px] flex-1 items-center justify-between bg-[#e9eaef] px-2">
        <Caret className="rotate-90" />
        <span className="mr-auto ml-2 h-[15px] w-[650px] rounded-full bg-[#d4d7df]" />
        <Caret className="-rotate-90" />
      </div>
      <span className="mr-[27px] h-3 w-1 border-x border-[#8390ab]" />
    </div>
  </div>
);

const StatusBar = () => {
  const [zoom, setZoom] = useState(46);

  return (
    <footer className="relative flex h-[34px] shrink-0 items-center bg-[#f5f6f8] pl-[15px] whitespace-nowrap">
      <button type="button" aria-label="宏">
        <Icon w={22} h={20}>
          <path d="M8 14H1V2h14M15 2v9M15 2h5v9M7 17h4M12 11v6q0 2-3 2M20 12h-2q-2 0-2 2t2 2 2 2-2 1h-3" />
        </Icon>
      </button>
      <Sep className="ml-[14px] h-[18px]" />
      <button type="button" className="ml-2.5 flex items-center gap-[5px]">
        <svg width="19" height="18" viewBox="0 0 19 18">
          <path d="M6 0h13v11q0 3-3 3H6z" fill="#a99df8" />
          <path d="M4 3h12v12q0 3-3 3H0V7q0-4 4-4" fill="#6a5ce8" />
          <path d="M4 13V8h2q2 0 2 1.500T6 11H4M10 13V8l2 3 2-3v5" fill="none" stroke="#fff" />
        </svg>
        项目管理
        <Caret up className="ml-1" />
      </button>
      <div className="ml-[19px] flex gap-[5px] text-base">
        <span>平均值=9462.9108910891</span>
        <span>计数=1010</span>
        <span>求和=382万3016</span>
      </div>
      <div className="ml-auto flex items-center pr-[18px]">
        <button type="button" aria-label="护眼模式">
          <Icon w={22} h={20}>
            <path d="M1 13q10-13 20 0-10 12-20 0M11 0v4M3 2l2 3M19 2l-2 3" />
            <circle cx="11" cy="12.500" r="3.500" />
          </Icon>
        </button>
        <button type="button" aria-label="阅读模式" className="ml-2 flex items-center gap-1">
          <Icon w={20} h={20}><path d="M7 1h6v18H7zM1 7h18v6H1z" /></Icon>
          <Caret />
        </button>
        <Sep className="mr-2.5 ml-[14px] h-[19px]" />
        <div className="flex items-center">
          <button type="button" aria-label="普通视图" className="flex h-[30px] w-[29px] items-center justify-center rounded-xs bg-[#d9dde4]">
            <Icon w={20} h={18}><path d="M1 1h18v16H1zM1 6h18M1 12h18M7 1v16M13 1v16" /></Icon>
          </button>
          <button type="button" aria-label="分页预览" className="ml-2">
            <Icon w={19} h={20}><path d="M1 1h17v18H1z" fill="#c8ccd6" /><path d="M4 4h11v12H4z" fill="#fff" /><path d="M9.500 4v12" /></Icon>
          </button>
          <button type="button" aria-label="页面布局视图" className="ml-[13px]">
            <Icon w={20} h={20}><path d="M1 1h18v18H1zM7 1v10M13 1v10H1" /></Icon>
          </button>
        </div>
        <Sep className="mr-2.5 ml-[15px] h-[19px]" />
        <button type="button" className="flex items-center gap-[5px]">
          100%
          <Caret />
        </button>
        <button type="button" aria-label="缩小" className="ml-[15px]">
          <Icon w={12} h={12} color="#3f4d6c"><path d="M0 6h12" strokeWidth="3" /></Icon>
        </button>
        <input
          type="range"
          aria-label="缩放"
          value={zoom}
          onChange={(e) => setZoom(Number(e.target.value))}
          className="mr-1 ml-[15px] h-4 w-[183px] appearance-none bg-[linear-gradient(90deg,#3f4d6c_46%,#d0d3da_46%)] bg-[length:100%_1px] bg-center bg-no-repeat [&::-webkit-slider-thumb]:h-[14px] [&::-webkit-slider-thumb]:w-[14px] [&::-webkit-slider-thumb]:appearance-none [&::-webkit-slider-thumb]:rounded-full [&::-webkit-slider-thumb]:border [&::-webkit-slider-thumb]:border-[#565d6b] [&::-webkit-slider-thumb]:bg-[#f5f6f8]"
        />
        <button type="button" aria-label="放大">
          <Icon w={12} h={12} color="#3f4d6c"><path d="M0 6h12M6 0v12" strokeWidth="2.500" /></Icon>
        </button>
        <button type="button" aria-label="全屏" className="ml-[17px]">
          <Icon w={19} h={19} color="#3f4d6c"><path d="M1 6V1h5M1 1l5 5M13 1h5v5M18 1l-5 5M1 13v5h5M1 18l5-5M18 13v5h-5M18 18l-5-5" strokeWidth="1.800" /></Icon>
        </button>
      </div>
      <span className="pointer-events-none absolute right-4 text-xl leading-6 font-light text-[#7d7f84]/90">
        CSDN @清风微凉 aaa
      </span>
    </footer>
  );
};

const dialogButton = 'flex h-[30px] items-center justify-center gap-[7px] border border-[#adadad] bg-[#e1e1e1] pb-0.5 whitespace-nowrap';

const SortDialog = () => (
  <div
    role="dialog"
    aria-label="排序"
    className="absolute top-[392px] left-[605px] z-20 w-[682px] border border-[#6e6e6e] bg-[#f0f0f0] leading-5 text-black shadow-[0_8px_22px_4px_rgba(0,0,0,0.4)]"
  >
    <div className="flex h-[31px] items-center bg-white pr-3.5 pb-0.5 pl-[3px]">
      <Logo size={18} />
      <span className="ml-1.5">排序</span>
      <button type="button" aria-label="关闭" className="ml-auto">
        <Icon w={14} h={14} color="#000"><path d="m1 1 12 12M13 1 1 13" strokeWidth="1.100" /></Icon>
      </button>
    </div>
    <div className="flex items-center gap-1 pt-[7px] pl-1.5">
      <button type="button" className={clsx(dialogButton, 'w-[115px]')}>
        <Icon w={14} h={14}><path d="M7 0v14M0 7h14" strokeWidth="2" /></Icon>
        添加条件(A)
      </button>
      <button type="button" className={clsx(dialogButton, 'w-[115px]')}>
        <Icon w={15} h={17} color="#4d5970"><path d="M0 4h15M5 4V1h5v3M2 4v12h11V4M6 7v6M9 7v6" /></Icon>
        删除条件(D)
      </button>
      <button type="button" className={clsx(dialogButton, 'w-[114px]')}>
        <Icon w={16} h={17} color="#4d5970"><path d="M5 5H1v11h9v-4M6 1h9v11H6z" /></Icon>
        复制条件(C)
      </button>
      <Sep className="h-[30px] bg-[#a0a0a0]" />
      {['M7 1l6 6h-3v10H4V7H1z', 'M7 17l6-6h-3V1H4v10H1z'].map((d, i) => (
        <button key={d} type="button" disabled aria-label={i ? '下移' : '上移'} className="flex h-[30px] w-[30px] items-center justify-center bg-[#cccccc]">
          <Icon w={14} h={18} color="#a9a9a9"><path d={d} /></Icon>
        </button>
      ))}
      <button type="button" className={clsx(dialogButton, 'w-[96px]')}>选项(O)...</button>
      <label className="flex items-center gap-[5px] pb-0.5 whitespace-nowrap">
        <span className="relative flex h-4 w-4">
          <input type="checkbox" defaultChecked className="peer h-4 w-4 appearance-none border border-[#333] bg-white" />
          <Icon w={16} h={16} color="#222" className="pointer-events-none absolute inset-0 hidden peer-checked:block">
            <path d="m3.500 8 3 3.500L12.500 4" />
          </Icon>
        </span>
        数据包含标题(H)
      </label>
    </div>
    <div className="mx-[5px] mt-[5px] h-[115px] border border-[#828790] bg-white p-px">
      <div className="grid h-[29px] grid-cols-[222px_222px_1fr] items-stretch">
        {['列', '排序依据', '次序'].map((h) => (
          <div key={h} className="flex items-center border-r border-[#e5e5e5] pl-[5px]">{h}</div>
        ))}
      </div>
      <div className="grid h-[30px] grid-cols-[222px_222px_1fr] items-center bg-[#e5e5e5]">
        <div className="flex items-center pl-0.5">
          <span className="w-[100px]">主要关键字</span>
          <Combo label="主要关键字" value="职务" className="h-[25px] w-[110px]" />
        </div>
        <div className="pl-0.5">
          <Combo label="排序依据" value="数值" className="h-[25px] w-[210px]" />
        </div>
        <div className="relative pl-0.5">
          <Combo label="次序" value="降序" options={['升序', '自定义序列...']} className="h-[25px] w-[217px] bg-[linear-gradient(90deg,#fff_201px,#e3e7ef_201px)]" />
          <ul role="listbox" aria-label="次序选项" className="absolute top-full left-0.5 w-[217px] border border-[#d0d3da] bg-white shadow-[2px_2px_3px_#777]">
            {['升序', '降序', '自定义序列...'].map((o, i) => (
              <li key={o} role="option" aria-selected={i === 2} className={clsx('h-[25px] pl-[3px] leading-6', i === 2 && 'bg-[#d9dde5]')}>
                {o}
              </li>
            ))}
          </ul>
        </div>
      </div>
    </div>
    <div className="flex justify-end gap-[9px] pt-[5px] pr-[7px] pb-[7px]">
      <button type="button" className="h-[34px] w-24 border-2 border-[#0078d7] bg-[#e1e1e1] pb-0.5">确定</button>
      <button type="button" className="h-[34px] w-24 border border-[#adadad] bg-[#e1e1e1] pb-0.5">取消</button>
    </div>
    <svg width="12" height="12" viewBox="0 0 12 12" fill="#bfbfbf" className="absolute right-0.5 bottom-0.5">
      <path d="M8 0h3v3H8zM8 4h3v3H8zM4 4h3v3H4zM8 8h3v3H8zM4 8h3v3H4zM0 8h3v3H0z" />
    </svg>
  </div>
);

const RedArrow = ({ w, h, points, className }) => (
  <svg width={w} height={h} viewBox={`0 0 ${w} ${h}`} className={clsx('pointer-events-none absolute z-30', className)}>
    <polygon points={points} fill="#ff2012" />
  </svg>
);

export default function App() {
  return (
    <div className="relative flex h-screen flex-col overflow-hidden bg-[#f5f6f8] font-['Noto_Sans','Noto_Sans_CJK_SC',sans-serif] text-[15px] leading-5 text-[#262c3a]">
      <TitleBar />
      <MenuBar />
      <Ribbon />
      <FormulaBar />
      <main className="flex min-h-0 flex-1">
        <Grid />
        <VScroll />
      </main>
      <SheetTabs />
      <StatusBar />
      <SortDialog />
      <RedArrow w={58} h={107} points="2,0 17,10 12,10 57,106 5,15 1,18" className="top-[137px] left-[1411px]" />
      <RedArrow w={30} h={76} points="5,0 18,13 13,11 29,75 6,15 0,18" className="top-[525px] left-[753px]" />
      <RedArrow w={175} h={31} points="0,24 15,13 14,17 174,0 16,26 18,30" className="top-[561px] left-[1194px]" />
    </div>
  );
}
